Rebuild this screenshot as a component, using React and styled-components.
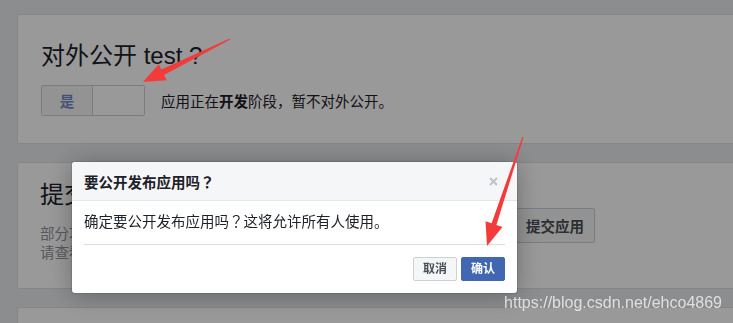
import React from "react";
import styled, { createGlobalStyle } from "styled-components";

const GlobalStyle = createGlobalStyle`
  html, body {
    margin: 0;
    padding: 0;
    background: #e9ebee;
    overflow: hidden;
  }
  body {
    font-family: "Liberation Sans", "Noto Sans CJK SC", sans-serif;
    color: #1d2129;
  }
`;

const Page = styled.div`
  width: 733px;
  height: 323px;
  padding: 14px 0 0 17px;
  box-sizing: border-box;
  display: flex;
  flex-direction: column;
  gap: 18px;
  overflow: hidden;
`;

const Card = styled.section`
  flex-shrink: 0;
  background: #fff;
  border: 1px solid #dddfe2;
  border-radius: 3px;
  margin-right: -30px;
  padding: ${({ pad }) => pad};
  min-height: ${({ minH }) => minH || "auto"};
`;

const Title = styled.h2`
  margin: 0;
  font-size: 24px;
  line-height: 28px;
  font-weight: 400;
`;

const ToggleRow = styled.div`
  display: flex;
  align-items: center;
  gap: 16px;
  margin-top: 15px;
  font-size: 14.5px;
`;

const Toggle = styled.div`
  display: flex;
  height: 31px;
  border: 1px solid #ccd0d5;
  border-radius: 2px;
  box-sizing: border-box;
  overflow: hidden;
`;

const ToggleHalf = styled.div`
  width: ${({ w }) => w}px;
  display: flex;
  align-items: center;
  justify-content: center;
  background: ${({ active }) => (active ? "#f5f6f7" : "#fff")};
  color: #7388c4;
  font-weight: 600;
  font-size: 14.5px;
  & + & {
    border-left: 1px solid #ccd0d5;
  }
`;

const Strong = styled.b`
  font-weight: 700;
`;

/* centred full-width punctuation, as the original font draws it */
const Punct = styled.span`
  font-family: "Noto Sans CJK JP", "Noto Sans CJK SC", sans-serif;
  line-height: 1;
`;

const SubmitRow = styled.div`
  display: grid;
  grid-template-columns: 475px auto;
  align-items: start;
`;

const Desc = styled.p`
  margin: 16px 0 0;
  font-size: 14.5px;
  line-height: 19px;
  color: #90949c;
`;

const OutlineButton = styled.button`
  margin-top: 27px;
  width: 80px;
  height: 35px;
  border: 1px solid #ccd0d5;
  border-radius: 2px;
  background: #f5f6f7;
  color: #4b4f56;
  font-family: inherit;
  font-size: 14.5px;
  font-weight: 700;
`;

const Overlay = styled.div`
  position: fixed;
  inset: 0;
  background: rgba(0, 0, 0, 0.4);
`;

const Dialog = styled.div`
  position: fixed;
  left: 72px;
  top: 162px;
  width: 445px;
  background: #fff;
  border-radius: 3px;
  box-shadow: 0 2px 26px rgba(0, 0, 0, 0.3), 0 0 0 1px rgba(0, 0, 0, 0.1);
  overflow: hidden;
`;

const DialogHeader = styled.div`
  height: 38px;
  display: flex;
  align-items: center;
  justify-content: space-between;
  padding: 0 19px 0 12px;
  background: #f5f6f7;
  border-bottom: 1px solid #e5e5e5;
  font-size: 14.5px;
  font-weight: 700;
`;

const DialogBody = styled.div`
  height: 19px;
  margin: 0 12px;
  padding: 12px 0;
  border-bottom: 1px solid #dddfe2;
  font-size: 14.5px;
  line-height: 19px;
`;

const DialogFooter = styled.div`
  display: flex;
  justify-content: flex-end;
  gap: 4px;
  padding: 12px;
`;

const Button = styled.button`
  height: 24px;
  padding: 0 9px;
  border-radius: 2px;
  border: 1px solid ${({ primary }) => (primary ? "#4267b2" : "#ced0d4")};
  background: ${({ primary }) => (primary ? "#4267b2" : "#f5f6f7")};
  color: ${({ primary }) => (primary ? "#fff" : "#4b4f56")};
  font-family: inherit;
  font-size: 12px;
  font-weight: 700;
  line-height: 22px;
`;

const Annotations = styled.svg`
  position: fixed;
  inset: 0;
  pointer-events: none;
`;

const Watermark = styled.div`
  position: fixed;
  right: 11px;
  bottom: 11px;
  font-family: "Liberation Sans", sans-serif;
  font-size: 16px;
  line-height: 18px;
  color: rgba(255, 255, 255, 0.72);
`;

const Close = () => (
  <svg width="9" height="9" viewBox="0 0 9 9">
    <path d="M1 1L8 8M8 1L1 8" stroke="#bec2c9" strokeWidth="2" />
  </svg>
);

export default function App() {
  return (
    <>
      <GlobalStyle />
      <Page>
        <Card pad="27px 23px 27px 23px">
          <Title>对外公开 test ?</Title>
          <ToggleRow>
            <Toggle>
              <ToggleHalf w={50} active>
                是
              </ToggleHalf>
              <ToggleHalf w={51} />
            </Toggle>
            <span>
              应用正在<Strong>开发</Strong>阶段，暂不对外公开。
            </span>
          </ToggleRow>
        </Card>
        <Card pad="18px 23px 25px 22px">
          <SubmitRow>
            <div>
              <Title>提交应用审核</Title>
              <Desc>
                部分功能需要通过审核后才能对外公开使用。
                <br />
                请查看审核指南了解详情。
              </Desc>
            </div>
            <OutlineButton>提交应用</OutlineButton>
          </SubmitRow>
        </Card>
        <Card pad="20px 23px" minH="60px" />
      </Page>
      <Overlay />
      <Dialog>
        <DialogHeader>
          <span>
            要公开发布应用吗<Punct>？</Punct>
          </span>
          <Close />
        </DialogHeader>
        <DialogBody>
          确定要公开发布应用吗<Punct>？</Punct>这将允许所有人使用。
        </DialogBody>
        <DialogFooter>
          <Button>取消</Button>
          <Button primary>确认</Button>
        </DialogFooter>
      </Dialog>
      <Annotations width="733" height="323">
        <polygon
          fill="#f43b3b"
          points="230.3,39.6 164,74.9 166.7,80.3 143,82 158.7,64.2 161.4,69.6 229.7,38.4"
        />
        <polygon
          fill="#f43b3b"
          points="523.6,137.2 496.4,224.9 502.5,227 487,246 485.5,221.3 491.6,223.3 522.4,136.8"
        />
      </Annotations>
      <Watermark>https://blog.csdn.net/ehco4869</Watermark>
    </>
  );
}
